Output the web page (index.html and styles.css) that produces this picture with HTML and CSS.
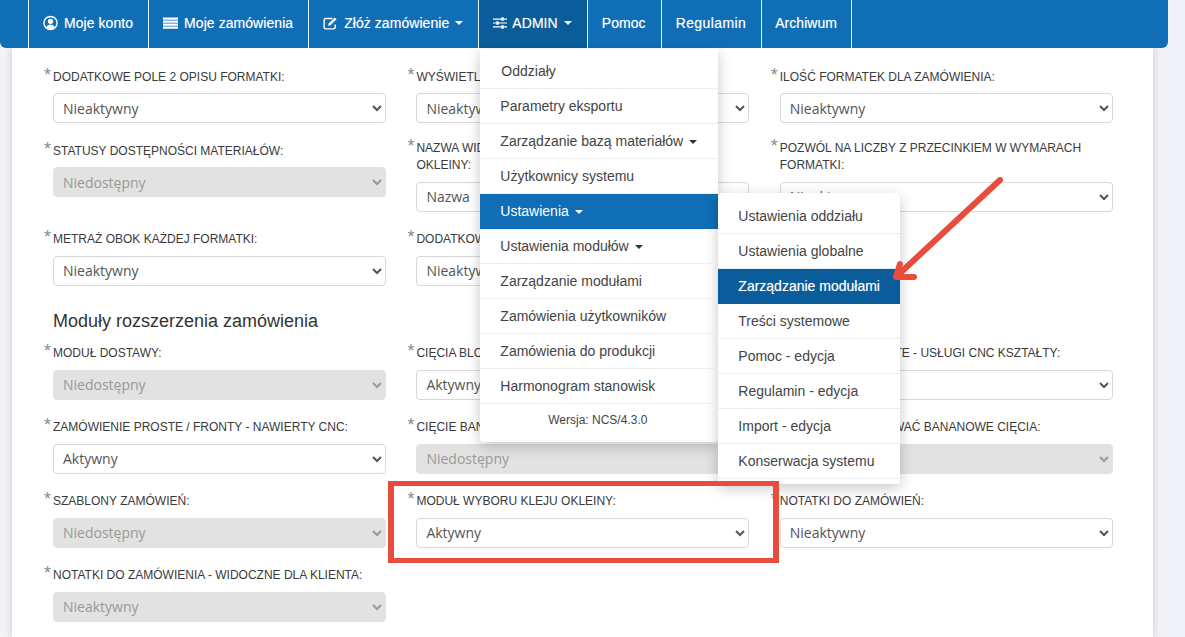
FILE: index.html
```html
<!DOCTYPE html>
<html lang="pl">
<head>
<meta charset="utf-8">
<title>Zarządzanie modułami</title>
<link rel="stylesheet" href="styles.css">
</head>
<body>
<header class="nav">
  <ul class="nav-list">
    <li class="nav-item"><a class="nav-link"><svg class="ico" viewBox="0 0 16 16"><circle cx="8" cy="8" r="7" fill="none" stroke="#fff" stroke-width="1.500"/><circle cx="8" cy="6.200" r="2.800" fill="#fff"/><path d="M3.400 12.800c.8-2.200 2.500-3.300 4.600-3.300s3.800 1.100 4.600 3.300c-1.100 1.200-2.800 2-4.600 2s-3.500-.8-4.600-2z" fill="#fff"/></svg>Moje konto</a></li>
    <li class="nav-item"><a class="nav-link"><svg class="ico" viewBox="0 0 16 16"><path d="M0 2h16v2.500H0zM0 5.300h16v2.400H0zM0 8.500h16v2.400H0zM0 11.700h16v2.400H0z" fill="#fff"/></svg>Moje zamówienia</a></li>
    <li class="nav-item"><a class="nav-link"><svg class="ico" viewBox="0 0 16 16"><path d="M13 9.500v3A1.800 1.800 0 0 1 11.200 14.300H3A1.800 1.800 0 0 1 1.200 12.500V5A1.800 1.800 0 0 1 3 3.200h7" fill="none" stroke="#fff" stroke-width="1.500"/><path d="M6 8.500L12.500 2l2 2L8 10.500l-2.500.5z" fill="#fff"/></svg>Złóż zamówienie<span class="caret"></span></a></li>
    <li class="nav-item nav-item-open">
      <a class="nav-link"><svg class="ico ico-narrow" viewBox="0 0 16 16"><path d="M0 3.500h16M0 8h16M0 12.500h16" stroke="#fff" stroke-width="1.400"/><path d="M9.500 1.500h2.800v4H9.500zM3.800 6h2.800v4H3.800zM9.500 10.500h2.800v4H9.500z" fill="#fff"/></svg>ADMIN<span class="caret"></span></a>
      <ul class="menu">
        <li class="menu-item menu-item-first">Oddziały</li>
        <li class="menu-item">Parametry eksportu</li>
        <li class="menu-item">Zarządzanie bazą materiałów<span class="caret caret-dark"></span></li>
        <li class="menu-item">Użytkownicy systemu</li>
        <li class="menu-item menu-item-active">Ustawienia<span class="caret"></span>
          <ul class="menu submenu">
            <li class="menu-item">Ustawienia oddziału</li>
            <li class="menu-item">Ustawienia globalne</li>
            <li class="menu-item menu-item-current">Zarządzanie modułami</li>
            <li class="menu-item">Treści systemowe</li>
            <li class="menu-item">Pomoc - edycja</li>
            <li class="menu-item">Regulamin - edycja</li>
            <li class="menu-item">Import - edycja</li>
            <li class="menu-item">Konserwacja systemu</li>
          </ul>
        </li>
        <li class="menu-item">Ustawienia modułów<span class="caret caret-dark"></span></li>
        <li class="menu-item">Zarządzanie modułami</li>
        <li class="menu-item">Zamówienia użytkowników</li>
        <li class="menu-item">Zamówienia do produkcji</li>
        <li class="menu-item">Harmonogram stanowisk</li>
        <li class="menu-version">Wersja: NCS/4.3.0</li>
      </ul>
    </li>
    <li class="nav-item"><a class="nav-link">Pomoc</a></li>
    <li class="nav-item"><a class="nav-link nav-link-spaced">Regulamin</a></li>
    <li class="nav-item"><a class="nav-link">Archiwum</a></li>
  </ul>
</header>

<main class="card">
  <div class="grid">
    <div class="field"><label class="label">DODATKOWE POLE 2 OPISU FORMATKI:</label><select class="select"><option>Nieaktywny</option></select></div>
    <div class="field"><label class="label">WYŚWIETLANIE DODATKOWEGO POLA:</label><select class="select"><option>Nieaktywny</option></select></div>
    <div class="field"><label class="label">ILOŚĆ FORMATEK DLA ZAMÓWIENIA:</label><select class="select"><option>Nieaktywny</option></select></div>

    <div class="field"><label class="label">STATUSY DOSTĘPNOŚCI MATERIAŁÓW:</label><select class="select" disabled><option>Niedostępny</option></select></div>
    <div class="field field-double"><label class="label">NAZWA WIDOCZNA W ZAMÓWIENIU DLA RODZAJU OKLEINY:</label><select class="select"><option>Nazwa</option></select></div>
    <div class="field field-double"><label class="label">POZWÓL NA LICZBY Z PRZECINKIEM W WYMARACH FORMATKI:</label><select class="select"><option>Nieaktywny</option></select></div>

    <div class="field"><label class="label">METRAŻ OBOK KAŻDEJ FORMATKI:</label><select class="select"><option>Nieaktywny</option></select></div>
    <div class="field"><label class="label">DODATKOWE POLE OPISU:</label><select class="select"><option>Nieaktywny</option></select></div>
    <div class="field"></div>
  </div>

  <h2 class="heading">Moduły rozszerzenia zamówienia</h2>

  <div class="grid">
    <div class="field"><label class="label">MODUŁ DOSTAWY:</label><select class="select" disabled><option>Niedostępny</option></select></div>
    <div class="field"><label class="label">CIĘCIA BLOKOWE:</label><select class="select"><option>Aktywny</option></select></div>
    <div class="field"><label class="label">ZAMÓWIENIE PROSTE - USŁUGI CNC KSZTAŁTY:</label><select class="select"><option>Nieaktywny</option></select></div>

    <div class="field"><label class="label">ZAMÓWIENIE PROSTE / FRONTY - NAWIERTY CNC:</label><select class="select"><option>Aktywny</option></select></div>
    <div class="field"><label class="label">CIĘCIE BANANOWE:</label><select class="select" disabled><option>Niedostępny</option></select></div>
    <div class="field"><label class="label">WOLNO PROJEKTOWAĆ BANANOWE CIĘCIA:</label><select class="select" disabled><option>Niedostępny</option></select></div>

    <div class="field"><label class="label">SZABLONY ZAMÓWIEŃ:</label><select class="select" disabled><option>Niedostępny</option></select></div>
    <div class="field"><label class="label">MODUŁ WYBORU KLEJU OKLEINY:</label><select class="select"><option>Aktywny</option></select></div>
    <div class="field"><label class="label">NOTATKI DO ZAMÓWIEŃ:</label><select class="select"><option>Nieaktywny</option></select></div>

    <div class="field"><label class="label">NOTATKI DO ZAMÓWIENIA - WIDOCZNE DLA KLIENTA:</label><select class="select" disabled><option>Nieaktywny</option></select></div>
  </div>
</main>

<div class="highlight"></div>
<svg class="arrow" viewBox="0 0 120 110"><path d="M107 3L5 98" fill="none" stroke="#e74c3c" stroke-width="6" stroke-linecap="round"/><path d="M7 87L3 100l18 0" fill="none" stroke="#e74c3c" stroke-width="6" stroke-linecap="round" stroke-linejoin="round"/></svg>
</body>
</html>
```

FILE: styles.css
```css
* { box-sizing: border-box; }

html, body {
  height: 100%;
}

body {
  margin: 0;
  height: 637px;
  overflow: hidden;
  background: #f2f3f8;
  font-family: "Liberation Sans", Arial, sans-serif;
  color: #333;
}

.nav {
  position: relative;
  z-index: 5;
  width: 1168px;
  height: 48px;
  padding-left: 28px;
  background: #106eb6;
  border-radius: 0 0 6px 6px;
}

.nav-list,
.menu {
  list-style: none;
  margin: 0;
  padding: 0;
}

.nav-list {
  display: flex;
  height: 48px;
}

.nav-item {
  position: relative;
  border-left: 1px solid #e8f2fa;
}

.nav-item:last-child {
  border-right: 1px solid #e8f2fa;
}

.nav-item:last-child .nav-link {
  padding: 0 14px 3px 13px;
}

.nav-item-open {
  background: #0b5c9a;
}

.nav-link {
  display: flex;
  align-items: center;
  height: 48px;
  padding: 0 15px 3px 14px;
  color: #fff;
  font-size: 14px;
  letter-spacing: .06px;
  white-space: nowrap;
  text-shadow: 0 0 1px rgba(255, 255, 255, .45);
}

.nav-link-spaced {
  letter-spacing: .4px;
}

.ico {
  width: 15px;
  height: 16px;
  margin-right: 6px;
  flex: none;
}

.ico-narrow {
  width: 14px;
  margin-right: 5px;
}

.caret {
  display: inline-block;
  width: 0;
  height: 0;
  margin-left: 6px;
  vertical-align: 2px;
  border-top: 4px solid #fff;
  border-left: 4px solid transparent;
  border-right: 4px solid transparent;
}

.caret-dark {
  border-top-color: #333;
}

.menu {
  position: absolute;
  top: 49px;
  left: 1px;
  width: 238px;
  padding-top: 5px;
  background: #fff;
  border-radius: 0 0 4px 4px;
  box-shadow: 0 4px 14px rgba(0, 0, 0, .22);
  color: #444;
}

.menu-item {
  position: relative;
  height: 35px;
  padding-left: 20px;
  border-bottom: 1px solid #eee;
  font-size: 14px;
  line-height: 34px;
  white-space: nowrap;
}

.menu-item-first {
  padding-left: 21px;
}

.menu-item-active {
  background: #106eb6;
  color: #fff;
  border-bottom-color: #106eb6;
}

.menu-item-current {
  background: #0b5c9a;
  color: #fff;
  border-bottom-color: #0b5c9a;
  text-shadow: 0 0 1px rgba(255, 255, 255, .45);
}

.menu-version {
  height: 38px;
  padding: 9px 3px 0 0;
  text-align: center;
  font-size: 12px;
  line-height: 14px;
}

.submenu {
  top: -1px;
  left: 238px;
  width: 182px;
  padding-top: 6px;
  padding-bottom: 5px;
  border-radius: 4px;
  color: #444;
}

.card {
  width: 1141px;
  height: 589px;
  margin-left: 12px;
  padding: 17px 0 0 41px;
  background: #fff;
  box-shadow: 0 0 8px rgba(0, 0, 0, .18);
}

.grid {
  display: grid;
  grid-template-columns: repeat(3, 333px);
  column-gap: 30.400px;
}

.field {
  min-height: 74px;
  padding-top: 3.500px;
  padding-bottom: 16px;
}

.field-double {
  padding-top: 1px;
}

.label {
  position: relative;
  display: block;
  margin-bottom: 7.500px;
  font-size: 12px;
  line-height: 17px;
  color: #3a3a3a;
}

.label::before {
  content: "*";
  position: absolute;
  left: -9px;
  top: -3px;
  color: #8a8a8a;
  font-size: 18px;
  line-height: 18px;
}

.select {
  display: block;
  width: 100%;
  height: 30px;
  padding: 0 5px;
  border: 1px solid #d8d8d8;
  border-radius: 4px;
  background-color: #fff;
  color: #555;
  font-family: "Open Sans", sans-serif;
  font-size: 14px;
}

.select:disabled {
  background-color: #e2e2e2;
  border-color: #e2e2e2;
  color: #999;
  opacity: 1;
}

.heading {
  height: 40px;
  margin: 0;
  font-size: 18px;
  font-weight: 400;
  line-height: 39px;
  color: #333;
}

.highlight {
  position: absolute;
  left: 388px;
  top: 481px;
  width: 391px;
  height: 82px;
  border: solid #e74c3c;
  border-width: 5px 6px;
  z-index: 6;
}

.arrow {
  position: absolute;
  left: 893px;
  top: 177px;
  width: 120px;
  height: 110px;
  z-index: 7;
}
```
